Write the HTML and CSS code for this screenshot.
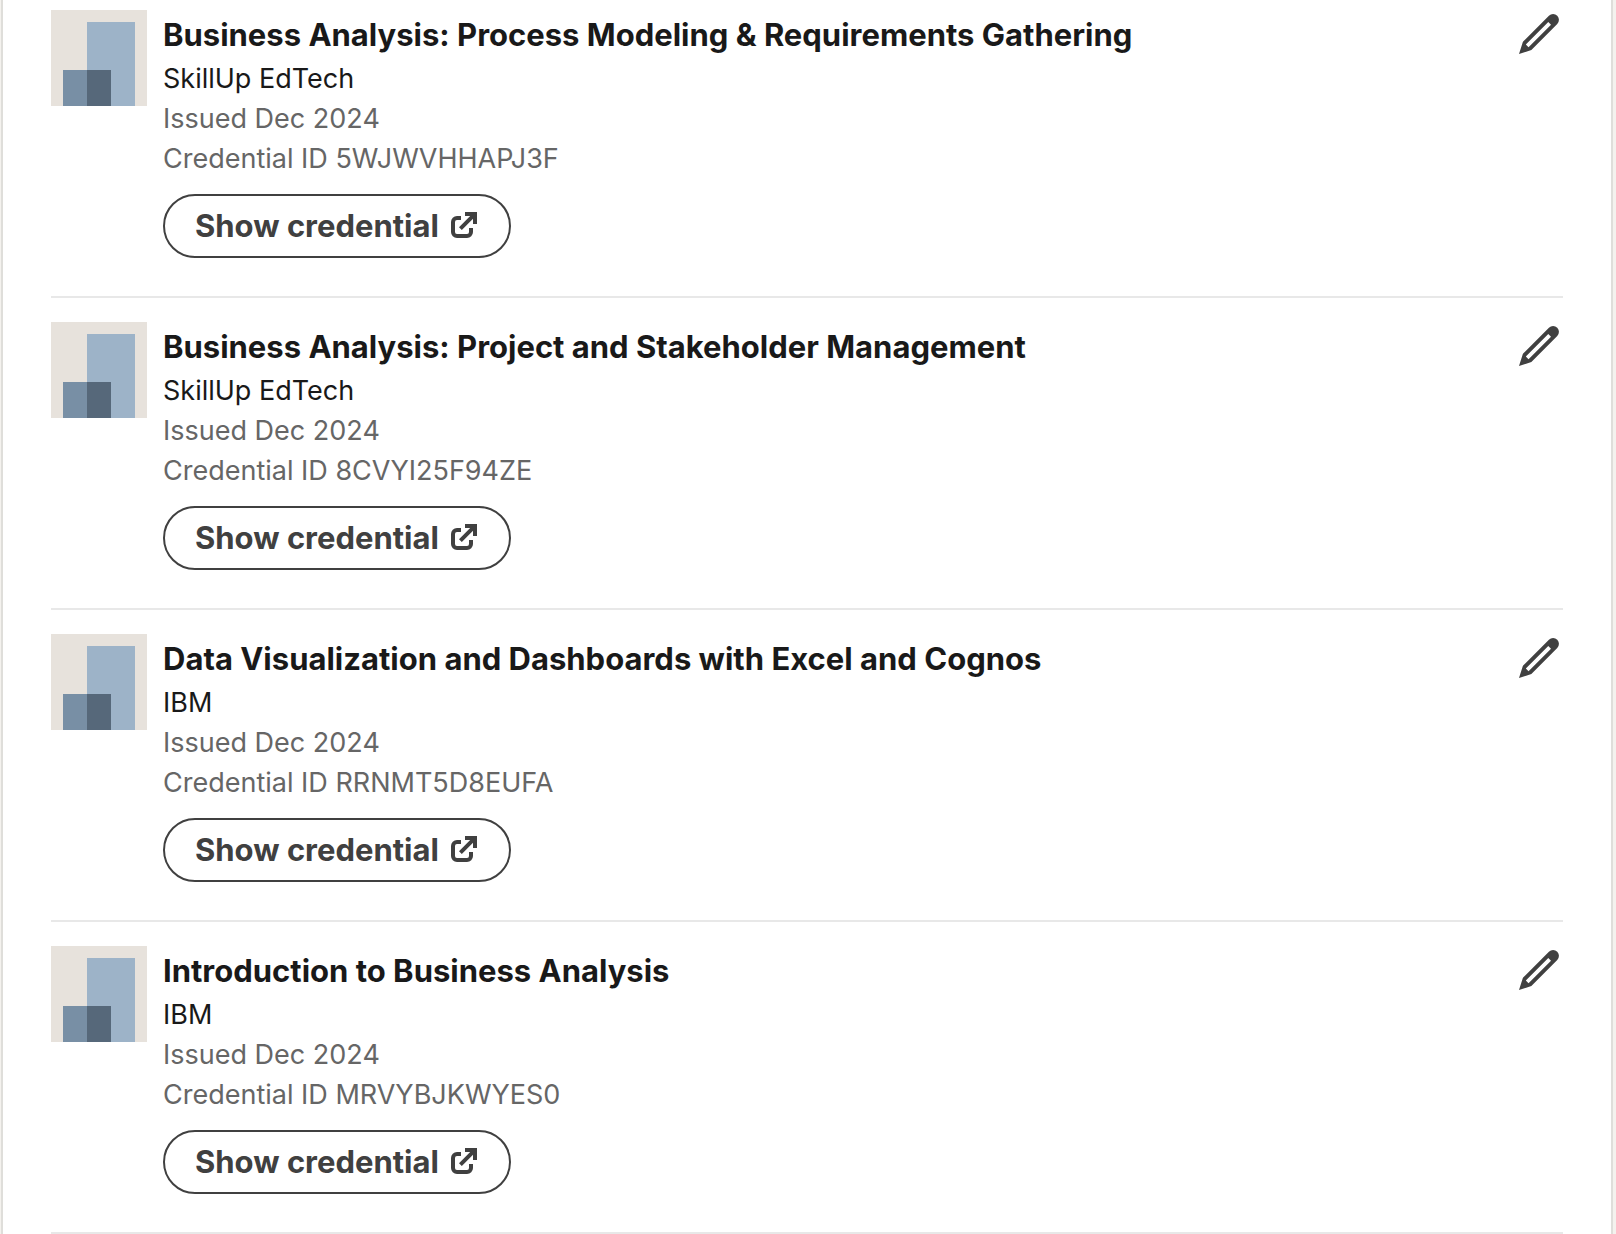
FILE: index.html
```html
<!DOCTYPE html>
<html lang="en">
<head>
<meta charset="utf-8">
<meta name="viewport" content="width=device-width, initial-scale=1">
<title>Licenses &amp; certifications</title>
<link rel="stylesheet" href="styles.css">
</head>
<body>
<svg class="sprite" aria-hidden="true">
  <symbol id="logo" viewBox="0 0 96 96">
    <path fill="#e7e2dc" d="M0 0h96v96H0z"/>
    <path fill="#9db3c8" d="M36 12h48v84H36z"/>
    <path fill="#788fa5" d="M12 60h24v36H12z"/>
    <path fill="#56687a" d="M36 60h24v36H36z"/>
  </symbol>
  <symbol id="pencil" viewBox="0 0 24 24">
    <path fill="currentColor" d="M21.13 2.86a3 3 0 00-4.17 0l-13 13L2 22l6.19-2L21.13 7a3 3 0 000-4.16zM6.77 18.57l-1.35-1.34L16.64 6 18 7.35z"/>
  </symbol>
  <symbol id="external" viewBox="0 0 16 16">
    <path fill="currentColor" d="M15 1v6h-2V4.41L7.41 10 6 8.59 11.59 3H9V1zm-4 10a1 1 0 01-1 1H5a1 1 0 01-1-1V6a1 1 0 011-1h2V3H5a3 3 0 00-3 3v5a3 3 0 003 3h5a3 3 0 003-3V9h-2z"/>
  </symbol>
</svg>
<main class="card">
  <ul class="list">
    <li class="item">
      <svg class="logo" aria-hidden="true"><use href="#logo"/></svg>
      <div class="details">
        <h3 class="title">Business Analysis: Process Modeling &amp; Requirements Gathering</h3>
        <p class="line">SkillUp EdTech</p>
        <p class="line muted">Issued Dec 2024</p>
        <p class="line muted">Credential ID 5WJWVHHAPJ3F</p>
        <button class="show" type="button">Show credential<svg class="show-icon" aria-hidden="true"><use href="#external"/></svg></button>
      </div>
      <button class="edit" type="button" aria-label="Edit"><svg class="edit-icon" aria-hidden="true"><use href="#pencil"/></svg></button>
    </li>
    <li class="item">
      <svg class="logo" aria-hidden="true"><use href="#logo"/></svg>
      <div class="details">
        <h3 class="title">Business Analysis: Project and Stakeholder Management</h3>
        <p class="line">SkillUp EdTech</p>
        <p class="line muted">Issued Dec 2024</p>
        <p class="line muted">Credential ID 8CVYI25F94ZE</p>
        <button class="show" type="button">Show credential<svg class="show-icon" aria-hidden="true"><use href="#external"/></svg></button>
      </div>
      <button class="edit" type="button" aria-label="Edit"><svg class="edit-icon" aria-hidden="true"><use href="#pencil"/></svg></button>
    </li>
    <li class="item">
      <svg class="logo" aria-hidden="true"><use href="#logo"/></svg>
      <div class="details">
        <h3 class="title">Data Visualization and Dashboards with Excel and Cognos</h3>
        <p class="line">IBM</p>
        <p class="line muted">Issued Dec 2024</p>
        <p class="line muted">Credential ID RRNMT5D8EUFA</p>
        <button class="show" type="button">Show credential<svg class="show-icon" aria-hidden="true"><use href="#external"/></svg></button>
      </div>
      <button class="edit" type="button" aria-label="Edit"><svg class="edit-icon" aria-hidden="true"><use href="#pencil"/></svg></button>
    </li>
    <li class="item">
      <svg class="logo" aria-hidden="true"><use href="#logo"/></svg>
      <div class="details">
        <h3 class="title">Introduction to Business Analysis</h3>
        <p class="line">IBM</p>
        <p class="line muted">Issued Dec 2024</p>
        <p class="line muted">Credential ID MRVYBJKWYES0</p>
        <button class="show" type="button">Show credential<svg class="show-icon" aria-hidden="true"><use href="#external"/></svg></button>
      </div>
      <button class="edit" type="button" aria-label="Edit"><svg class="edit-icon" aria-hidden="true"><use href="#pencil"/></svg></button>
    </li>
  </ul>
</main>
</body>
</html>
```

FILE: styles.css
```css
* {
  box-sizing: border-box;
}

body {
  margin: 0;
  background: #f4f2ee;
  color: #191919;
  font-family: Inter, "Liberation Sans", sans-serif;
}

.sprite {
  display: none;
}

.card {
  margin: 0 3px 0 1px;
  padding: 10px 48px 0;
  border: solid #dfdeda;
  border-width: 0 2px;
  background: #fff;
}

.list {
  display: flex;
  flex-direction: column;
  gap: 24px;
  margin: 0;
  padding: 0;
  list-style: none;
}

.item {
  display: flex;
  align-items: flex-start;
  gap: 16px;
  padding-bottom: 38px;
  border-bottom: 2px solid #e8e8e8;
}

.logo {
  flex: none;
  width: 96px;
  height: 96px;
}

.details {
  flex: 1;
  min-width: 0;
  padding-top: 1px;
}

.title {
  margin: 0;
  font-size: 31px;
  font-weight: 650;
  line-height: 48px;
}

.line {
  margin: 0;
  font-size: 27px;
  line-height: 40px;
}

.muted {
  color: #666;
}

.show {
  display: flex;
  align-items: center;
  gap: 8px;
  height: 64px;
  margin-top: 15px;
  padding: 0 30px;
  border: 2px solid #404040;
  border-radius: 32px;
  background: transparent;
  color: #404040;
  font: 650 31px/40px Inter, "Liberation Sans", sans-serif;
}

.show-icon {
  width: 32px;
  height: 32px;
}

.edit {
  flex: none;
  padding: 0;
  border: 0;
  background: transparent;
  color: #404040;
}

.edit-icon {
  display: block;
  width: 48px;
  height: 48px;
}
```
